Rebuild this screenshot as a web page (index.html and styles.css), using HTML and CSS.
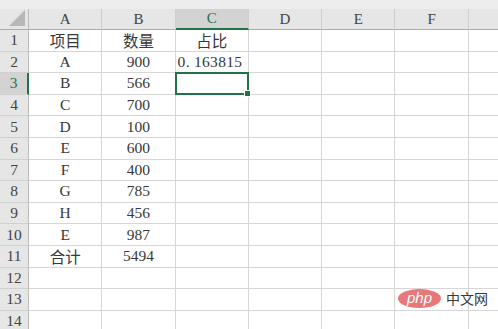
FILE: index.html
```html
<!DOCTYPE html>
<html>
<head>
<meta charset="utf-8">
<link rel="stylesheet" href="styles.css">
</head>
<body>
<div class="sheet">
  <div class="strip"></div>
  <div class="grid">
    <div class="corner"><span class="tri"></span></div>
    <div class="ch">A</div><div class="ch">B</div><div class="ch sel">C</div><div class="ch">D</div><div class="ch">E</div><div class="ch">F</div><div class="ch"></div>

    <div class="rh">1</div><div class="c">项目</div><div class="c">数量</div><div class="c">占比</div><div class="c"></div><div class="c"></div><div class="c"></div><div class="c"></div>
    <div class="rh">2</div><div class="c">A</div><div class="c">900</div><div class="c num">0. 163815</div><div class="c"></div><div class="c"></div><div class="c"></div><div class="c"></div>
    <div class="rh rsel">3</div><div class="c">B</div><div class="c">566</div><div class="c active"><span class="selbox"><span class="handle"></span></span></div><div class="c"></div><div class="c"></div><div class="c"></div><div class="c"></div>
    <div class="rh">4</div><div class="c">C</div><div class="c">700</div><div class="c"></div><div class="c"></div><div class="c"></div><div class="c"></div><div class="c"></div>
    <div class="rh">5</div><div class="c">D</div><div class="c">100</div><div class="c"></div><div class="c"></div><div class="c"></div><div class="c"></div><div class="c"></div>
    <div class="rh">6</div><div class="c">E</div><div class="c">600</div><div class="c"></div><div class="c"></div><div class="c"></div><div class="c"></div><div class="c"></div>
    <div class="rh">7</div><div class="c">F</div><div class="c">400</div><div class="c"></div><div class="c"></div><div class="c"></div><div class="c"></div><div class="c"></div>
    <div class="rh">8</div><div class="c">G</div><div class="c">785</div><div class="c"></div><div class="c"></div><div class="c"></div><div class="c"></div><div class="c"></div>
    <div class="rh">9</div><div class="c">H</div><div class="c">456</div><div class="c"></div><div class="c"></div><div class="c"></div><div class="c"></div><div class="c"></div>
    <div class="rh">10</div><div class="c">E</div><div class="c">987</div><div class="c"></div><div class="c"></div><div class="c"></div><div class="c"></div><div class="c"></div>
    <div class="rh">11</div><div class="c">合计</div><div class="c">5494</div><div class="c"></div><div class="c"></div><div class="c"></div><div class="c"></div><div class="c"></div>
    <div class="rh">12</div><div class="c"></div><div class="c"></div><div class="c"></div><div class="c"></div><div class="c"></div><div class="c"></div><div class="c"></div>
    <div class="rh">13</div><div class="c"></div><div class="c"></div><div class="c"></div><div class="c"></div><div class="c"></div><div class="c"></div><div class="c"></div>
    <div class="rh">14</div><div class="c"></div><div class="c"></div><div class="c"></div><div class="c"></div><div class="c"></div><div class="c"></div><div class="c"></div>
  </div>
  <div class="wm">
    <span class="php">php</span><span class="cn">中文网</span>
  </div>
</div>
</body>
</html>
```
FILE: styles.css
```css
html, body {
  margin: 0;
  padding: 0;
  background: #ffffff;
}
.sheet {
  position: relative;
  width: 498px;
  height: 329px;
  overflow: hidden;
  font-family: "Liberation Serif", "Noto Sans CJK SC", serif;
  font-size: 15.5px;
  color: #383838;
}
.strip {
  height: 9px;
  background: #ededed;
}
.grid {
  display: grid;
  grid-template-columns: 29px repeat(6, 73.3px) 60px;
  grid-template-rows: 21px repeat(14, 21.6px);
}
.corner {
  background: #e6e6e6;
  border-right: 1px solid #bcbcbc;
  border-bottom: 1px solid #acacac;
  position: relative;
}
.tri {
  position: absolute;
  right: 3px;
  bottom: 3px;
  width: 0;
  height: 0;
  border-left: 16px solid transparent;
  border-bottom: 16px solid #b8b8b8;
}
.ch {
  background: #e6e6e6;
  border-right: 1px solid #cfcfcf;
  border-bottom: 1px solid #acacac;
  display: flex;
  align-items: center;
  justify-content: center;
  color: #444444;
  font-size: 15px;
}
.ch.sel {
  background: #d3d3d3;
  border-bottom: 2px solid #217346;
  color: #217346;
}
.rh {
  background: #e6e6e6;
  border-right: 1px solid #bcbcbc;
  border-bottom: 1px solid #d0d0d0;
  display: flex;
  align-items: center;
  justify-content: center;
  color: #444444;
  font-size: 15.5px;
}
.rh.rsel {
  background: #d3d3d3;
  border-right: 2px solid #217346;
  color: #217346;
}
.c {
  border-right: 1px solid #d6d6d6;
  border-bottom: 1px solid #d6d6d6;
  display: flex;
  align-items: center;
  justify-content: center;
  white-space: nowrap;
  overflow: visible;
}
.c.num {
  justify-content: flex-start;
  padding-left: 2px;
  letter-spacing: 0.3px;
}
.c.active {
  position: relative;
}
.selbox {
  position: absolute;
  left: -1px;
  top: -1px;
  right: -1px;
  bottom: -1px;
  border: 2px solid #217346;
}
.handle {
  position: absolute;
  right: -4px;
  bottom: -4px;
  width: 5px;
  height: 5px;
  background: #217346;
  border: 1px solid #ffffff;
}
.wm {
  position: absolute;
  left: 398px;
  top: 288px;
  display: flex;
  align-items: center;
  gap: 5px;
}
.php {
  display: inline-flex;
  align-items: center;
  justify-content: center;
  width: 43px;
  height: 19px;
  border-radius: 50%;
  background: #e8777a;
  color: #ffffff;
  font-family: "Liberation Sans", sans-serif;
  font-style: italic;
  font-size: 15px;
  line-height: 1;
  padding-bottom: 2px;
  box-sizing: border-box;
}
.cn {
  font-family: "Noto Sans CJK SC", sans-serif;
  font-size: 14px;
  color: #3a3a3a;
}
```
